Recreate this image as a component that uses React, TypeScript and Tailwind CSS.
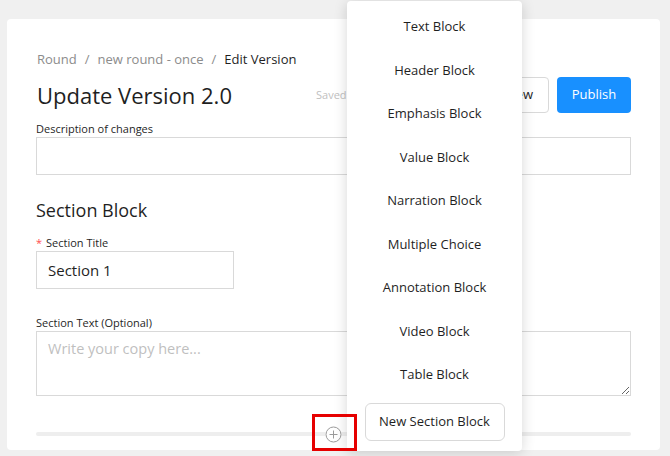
import React from 'react';

const blocks = [
  'Text Block',
  'Header Block',
  'Emphasis Block',
  'Value Block',
  'Narration Block',
  'Multiple Choice',
  'Annotation Block',
  'Video Block',
  'Table Block',
];

const PlusCircle = () => (
  <svg width="17" height="17" viewBox="0 0 17 17" fill="none" stroke="#9a9a9a" strokeWidth="1">
    <circle cx="8.5" cy="8.5" r="7.5" />
    <path d="M8.5 4.5v8M4.5 8.5h8" />
  </svg>
);

export default function App() {
  return (
    <div
      className="relative w-[670px] h-[456px] overflow-hidden bg-[#f0f0f0] text-[#1f1f1f]"
      style={{ fontFamily: '"Open Sans", "Liberation Sans", sans-serif' }}
    >
      {/* Card */}
      <div className="absolute left-[7px] top-[19px] w-[653px] h-[431px] bg-white rounded-[4px] px-[29px] pt-[29px]">
        {/* Breadcrumb */}
        <div className="flex items-center h-[22px] text-[13px] leading-[22px]">
          <span className="text-[#8c8c8c] pl-[1px]">Round</span>
          <span className="mx-[8px] text-[#8c8c8c]">/</span>
          <span className="text-[#8c8c8c]">new round - once</span>
          <span className="mx-[8px] text-[#8c8c8c]">/</span>
          <span className="text-[#1f1f1f]">Edit Version</span>
        </div>

        {/* Header */}
        <div className="flex items-center h-[36px] mt-[7px]">
          <h1 className="w-[280px] text-[22px] leading-[36px] pl-[1px]">Update Version 2.0</h1>
          <span className="text-[11px] text-[#bfbfbf]">Saved 2 minutes ago</span>
          <div className="ml-auto flex items-center gap-[8px]">
            <button className="h-[36px] px-[15px] rounded-[4px] border border-[#d9d9d9] bg-white text-[13px]">
              Preview
            </button>
            <button className="h-[36px] w-[74px] rounded-[4px] bg-[#1890ff] text-white text-[13px]">
              Publish
            </button>
          </div>
        </div>

        {/* Description */}
        <div className="mt-[7px] text-[11px] leading-[17px]">Description of changes</div>
        <div className="h-[38px] border border-[#d9d9d9] bg-white" />

        {/* Section block */}
        <h2 className="mt-[21px] text-[18px] leading-[28px]">Section Block</h2>

        <div className="mt-[11px] text-[11px] leading-[16px] flex items-center">
          <span className="text-[#ff4d4f] mr-[4px]">*</span>
          Section Title
        </div>
        <div className="w-[198px] h-[38px] border border-[#d9d9d9] flex items-center px-[11px] text-[15px]">
          Section 1
        </div>

        <div className="mt-[26px] text-[11px] leading-[16px]">Section Text (Optional)</div>
        <textarea
          className="block w-full h-[65px] border border-[#d9d9d9] px-[11px] py-[6px] text-[14.5px] resize-y outline-none placeholder:text-[#bfbfbf]"
          placeholder="Write your copy here..."
        />

        {/* Divider with add */}
        <div className="relative mt-[36px] h-[4px] rounded-full bg-[#eeeeee]">
          <div className="absolute left-[289px] top-[-6px] bg-white rounded-full">
            <PlusCircle />
          </div>
        </div>
      </div>

      {/* Dropdown menu */}
      <div className="absolute left-[347px] top-[1px] w-[175px] h-[450px] bg-white rounded-[4px] shadow-[0_2px_14px_rgba(0,0,0,0.16)] pt-[4px] flex flex-col items-center text-[13px]">
        {blocks.map((b) => (
          <div key={b} className="h-[43.5px] w-full flex items-center justify-center">
            {b}
          </div>
        ))}
        <button className="mt-[6px] w-[140px] h-[38px] rounded-[6px] border border-[#d9d9d9] bg-white text-[13px]">
          New Section Block
        </button>
      </div>

      {/* Highlight box */}
      <div className="absolute left-[312px] top-[414px] w-[45px] h-[37px] border-[3px] border-[#e60000]" />
    </div>
  );
}
